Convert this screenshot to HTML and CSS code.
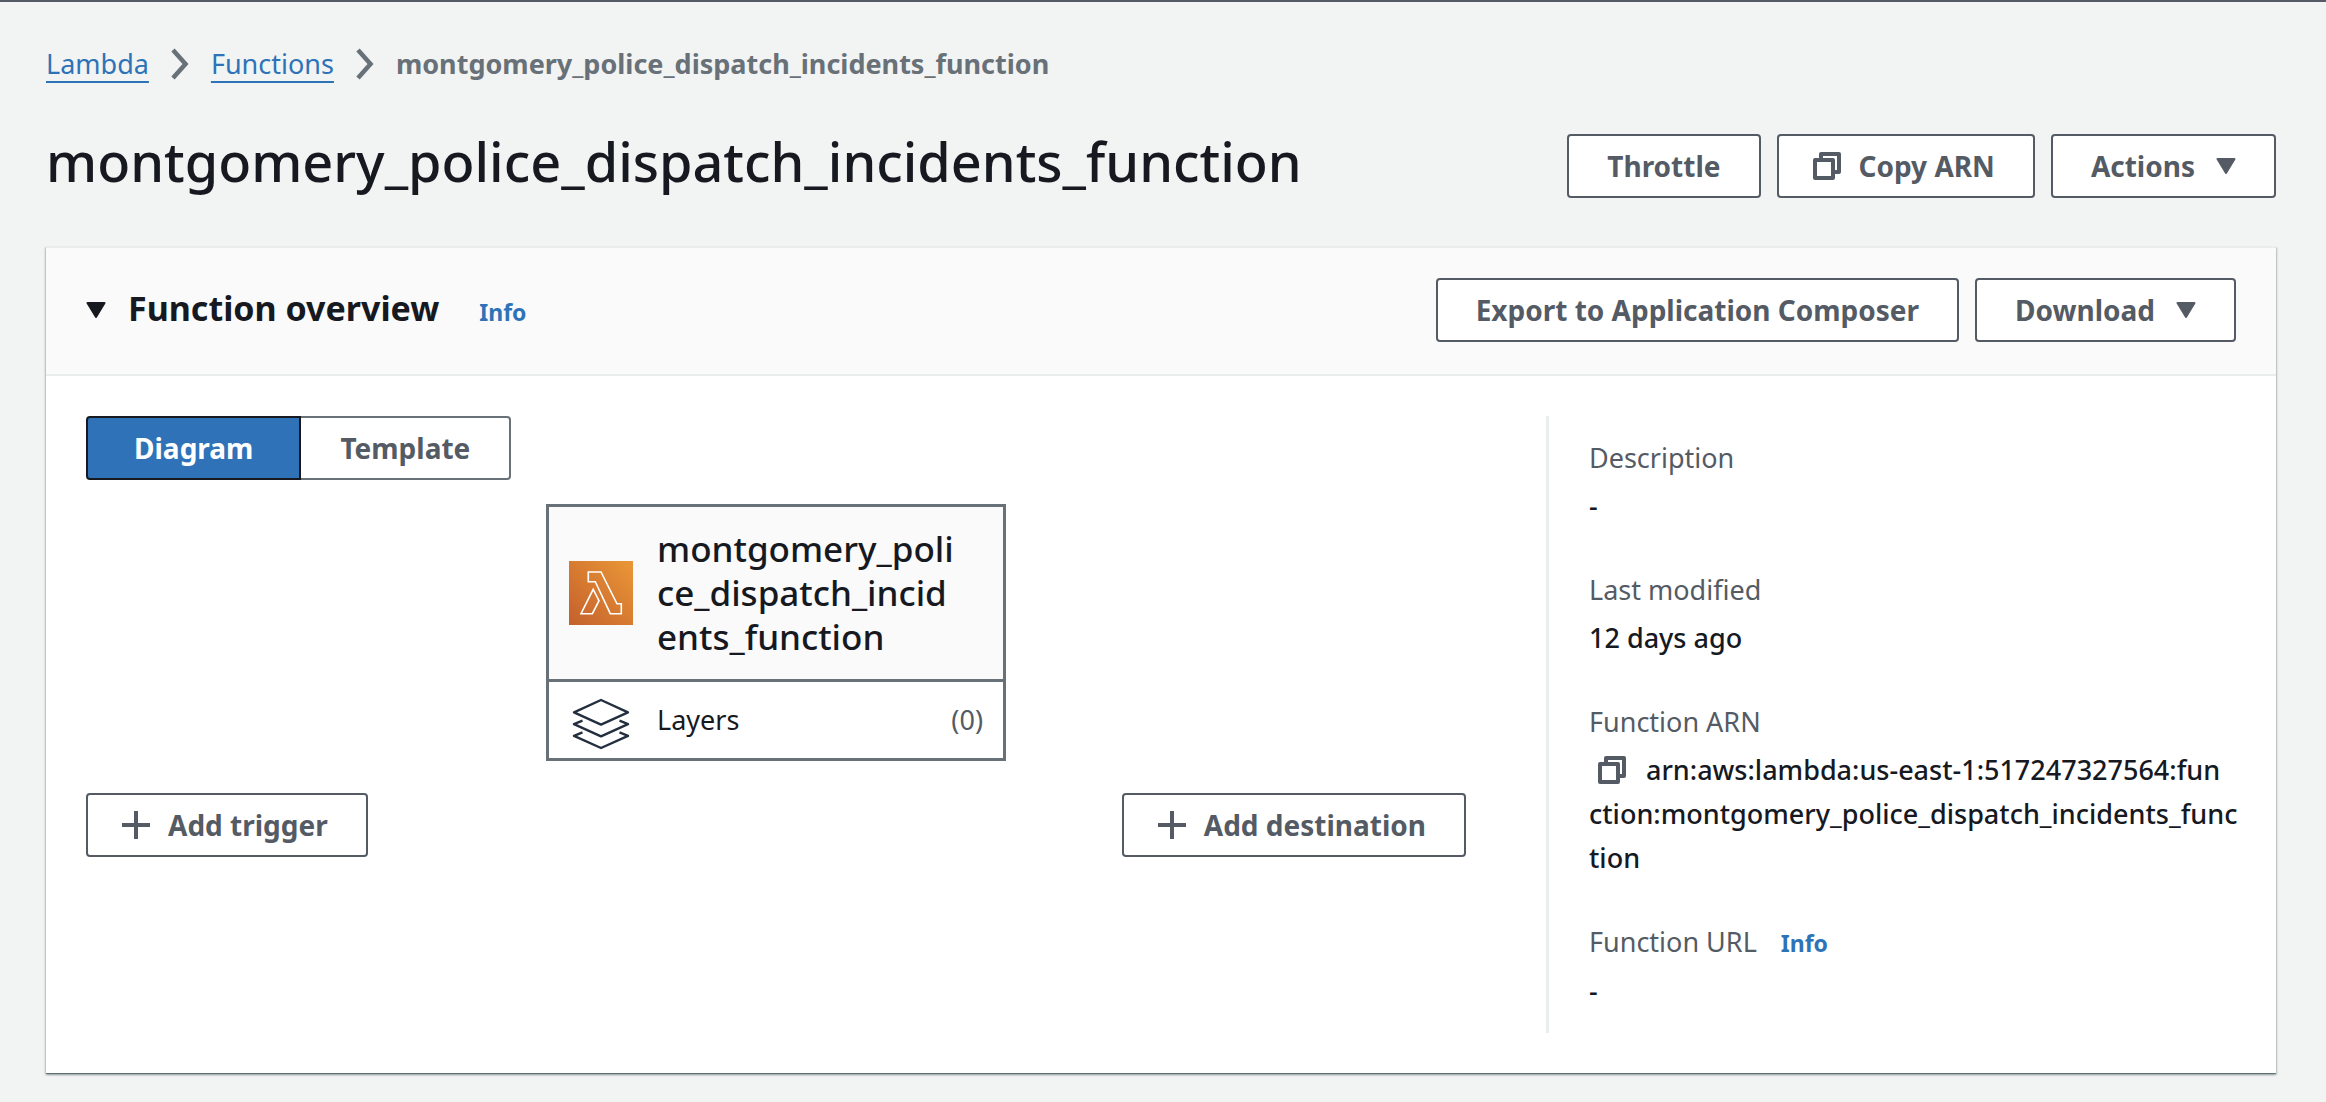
FILE: index.html
```
<!DOCTYPE html>
<html lang="en">
<head>
<meta charset="utf-8">
<meta name="viewport" content="width=device-width, initial-scale=1">
<title>montgomery_police_dispatch_incidents_function - Lambda</title>
<link rel="stylesheet" href="styles.css">
</head>
<body>
<svg width="0" height="0" class="sprite" aria-hidden="true">
  <symbol id="chevron" viewBox="0 0 18 32"><path d="M2 2 14.500 16 2 30" fill="none" stroke="currentColor" stroke-width="4.500"/></symbol>
  <symbol id="caret" viewBox="0 0 20 16"><path d="M1.500 1h17L10 15z" fill="currentColor" stroke="currentColor" stroke-width="2" stroke-linejoin="round"/></symbol>
  <symbol id="copy" viewBox="0 0 28 28"><path d="M2 8h18v18H2zM8 8V2h18v18h-6" fill="none" stroke="currentColor" stroke-width="4" stroke-linejoin="round"/></symbol>
  <symbol id="plus" viewBox="0 0 28 28"><path d="M14 0v28M0 14h28" fill="none" stroke="currentColor" stroke-width="4"/></symbol>
</svg>
<main class="page">
  <nav class="breadcrumb" aria-label="Breadcrumb">
    <a class="link" href="#lambda">Lambda</a>
    <svg class="chevron" aria-hidden="true"><use href="#chevron"/></svg>
    <a class="link" href="#functions">Functions</a>
    <svg class="chevron" aria-hidden="true"><use href="#chevron"/></svg>
    <span class="current">montgomery_police_dispatch_incidents_function</span>
  </nav>

  <header class="page-header">
    <h1>montgomery_police_dispatch_incidents_function</h1>
    <div class="actions">
      <button class="btn" type="button">Throttle</button>
      <button class="btn btn-icon" type="button"><svg class="icon" aria-hidden="true"><use href="#copy"/></svg>Copy ARN</button>
      <button class="btn btn-menu" type="button">Actions<svg class="caret" aria-hidden="true"><use href="#caret"/></svg></button>
    </div>
  </header>

  <section class="card">
    <header class="card-header">
      <div class="card-title">
        <svg class="caret" aria-hidden="true"><use href="#caret"/></svg>
        <h2>Function overview</h2>
        <a class="info" href="#info">Info</a>
      </div>
      <div class="actions">
        <button class="btn" type="button">Export to Application Composer</button>
        <button class="btn btn-menu" type="button">Download<svg class="caret" aria-hidden="true"><use href="#caret"/></svg></button>
      </div>
    </header>

    <div class="card-body">
      <div class="designer">
        <div class="segmented">
          <button class="segment selected" type="button" aria-pressed="true">Diagram</button>
          <button class="segment" type="button" aria-pressed="false">Template</button>
        </div>

        <div class="node">
          <div class="node-main">
            <svg class="node-icon" viewBox="0 0 64 64" aria-hidden="true">
              <defs><linearGradient id="lambda-fill" x1="0" y1="1" x2="1" y2="0"><stop offset="0" stop-color="#c4602c"/><stop offset="1" stop-color="#ea9737"/></linearGradient></defs>
              <path d="M0 0h64v64H0z" fill="url(#lambda-fill)"/>
              <path d="M19.300 11H32l16 31.800h4.300v9.900h-11L26.300 20.700h-7zM24.200 28.300l5.800 11.400-6.600 13H12z" fill="none" stroke="#fff" stroke-width="1.600"/>
            </svg>
            <span class="node-name">montgomery_poli<br>ce_dispatch_incid<br>ents_function</span>
          </div>
          <div class="node-layers">
            <svg class="node-icon" viewBox="0 0 64 64" aria-hidden="true">
              <path d="M32 12 59 24.300 32 36.600 5 24.300zM13.500 32.700 5 36.200 32 48.300 59 36.200 50.500 32.700M13.500 44.400 5 47.900 32 60 59 47.900 50.500 44.400" fill="none" stroke="#232f3e" stroke-width="2.400" stroke-linejoin="round"/>
            </svg>
            <span>Layers</span>
            <span class="count">(0)</span>
          </div>
        </div>

        <div class="endpoints">
          <button class="btn btn-icon" type="button"><svg class="icon" aria-hidden="true"><use href="#plus"/></svg>Add trigger</button>
          <button class="btn btn-icon" type="button"><svg class="icon" aria-hidden="true"><use href="#plus"/></svg>Add destination</button>
        </div>
      </div>

      <dl class="details">
        <div class="detail"><dt>Description</dt><dd>-</dd></div>
        <div class="detail"><dt>Last modified</dt><dd>12 days ago</dd></div>
        <div class="detail">
          <dt>Function ARN</dt>
          <dd><button class="copy-arn" type="button" aria-label="Copy function ARN"><svg class="icon" aria-hidden="true"><use href="#copy"/></svg></button>arn:aws:lambda:us-east-1:517247327564:fun<br>ction:montgomery_police_dispatch_incidents_func<br>tion</dd>
        </div>
        <div class="detail"><dt>Function URL<a class="info" href="#url-info">Info</a></dt><dd>-</dd></div>
      </dl>
    </div>
  </section>
</main>
</body>
</html>
```
FILE: styles.css
```
* { box-sizing: border-box; }

body {
  margin: 0;
  background: #f2f3f3;
  color: #16191f;
  font-family: "Noto Sans", "Open Sans", sans-serif;
  font-size: 27px;
  line-height: 44px;
}

h1, h2, dl, dd { margin: 0; }
svg { display: block; flex: none; }
button { font-family: inherit; cursor: pointer; }
.sprite { position: absolute; }

.page {
  border-top: 2px solid #545b64;
  padding: 40px 50px 30px 46px;
}

.breadcrumb {
  display: flex;
  align-items: center;
  gap: 22px;
  color: #687078;
}
.link {
  color: #2e73b8;
  text-decoration: underline 2px;
  text-underline-offset: 7px;
}
.chevron { width: 18px; height: 32px; }
.current { font-weight: 700; }

.page-header {
  display: flex;
  justify-content: space-between;
  align-items: flex-start;
  margin: 48px 0;
}
h1 {
  font-size: 54px;
  font-weight: 500;
  line-height: 54px;
}

.actions { display: flex; gap: 16px; }
.btn {
  display: flex;
  align-items: center;
  height: 64px;
  padding: 0 38px;
  border: 2px solid #545b64;
  border-radius: 4px;
  background: #fff;
  color: #545b64;
  font-size: 28px;
  font-weight: 700;
  white-space: nowrap;
}
.btn-icon { gap: 18px; padding-left: 34px; }
.btn-menu { gap: 21px; }
.icon { width: 28px; height: 28px; }
.caret { width: 20px; height: 16px; }

.card {
  border-top: 2px solid #eaeded;
  background: #fff;
  box-shadow: 0 1px 1px rgba(0, 28, 36, .4), 1px 2px 2px rgba(0, 28, 36, .2), -1px 2px 2px rgba(0, 28, 36, .2);
}
.card-header {
  display: flex;
  justify-content: space-between;
  align-items: flex-start;
  padding: 30px 40px 32px;
  border-bottom: 2px solid #eaeded;
  background: #fafafa;
}
.card-title {
  display: flex;
  align-items: baseline;
  line-height: 60px;
}
.card-title .caret { align-self: center; margin-right: 22px; }
h2 { font-size: 34px; font-weight: 700; }
.info {
  color: #2e73b8;
  font-size: 23px;
  font-weight: 700;
  text-decoration: none;
}
.card-title .info { margin-left: 40px; }

.card-body {
  display: grid;
  grid-template-columns: minmax(0, 1460fr) minmax(0, 690fr);
  padding: 40px;
}
.designer { padding-right: 80px; }

.segmented { display: flex; }
.segment {
  height: 64px;
  padding: 0 39px;
  border: 2px solid #687078;
  border-left: 0;
  border-radius: 0 4px 4px 0;
  background: #fff;
  color: #545b64;
  font-size: 28px;
  font-weight: 700;
}
.segment.selected {
  padding: 0 46px;
  border: 2px solid #16191f;
  border-radius: 4px 0 0 4px;
  background: #3072b7;
  color: #fff;
}

.node {
  width: 460px;
  margin: 24px auto 32px;
  border: 3px solid #687078;
}
.node-main, .node-layers {
  display: flex;
  align-items: center;
  gap: 24px;
  padding: 20px;
}
.node-main {
  border-bottom: 3px solid #687078;
  background: #fafafa;
}
.node-name { font-size: 35px; font-weight: 500; }
.node-layers { padding: 6px 20px; }
.node-icon { width: 64px; height: 64px; }
.count { margin-left: auto; color: #545b64; }

.endpoints { display: flex; justify-content: space-between; }

.details {
  display: grid;
  gap: 40px;
  padding: 20px 0 20px 40px;
  border-left: 3px solid #eaeded;
}
.detail { display: grid; gap: 4px; }
dt { color: #545b64; }
dd { font-weight: 500; white-space: nowrap; }
dt .info { margin-left: 24px; }
.copy-arn {
  display: inline-block;
  margin: 0 20px 0 9px;
  padding: 0;
  border: 0;
  background: none;
  color: #545b64;
  vertical-align: -4px;
}
```
